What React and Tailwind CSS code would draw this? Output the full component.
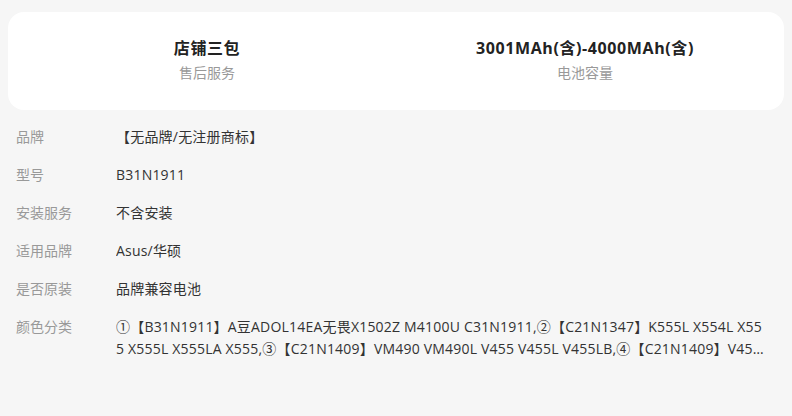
export default function App() {
  const summary = [
    { title: "店铺三包", sub: "售后服务" },
    { title: "3001MAh(含)-4000MAh(含)", sub: "电池容量" },
  ];

  const rows = [
    { label: "品牌", value: "【无品牌/无注册商标】" },
    { label: "型号", value: "B31N1911" },
    { label: "安装服务", value: "不含安装" },
    { label: "适用品牌", value: "Asus/华硕" },
    { label: "是否原装", value: "品牌兼容电池" },
    {
      label: "颜色分类",
      value:
        "①【B31N1911】A豆ADOL14EA无畏X1502Z M4100U C31N1911,②【C21N1347】K555L X554L X555 X555L X555LA X555,③【C21N1409】VM490 VM490L V455 V455L V455LB,④【C21N1409】V455 V455L V455LB X455 X455L X455LA",
    },
  ];

  return (
    <div
      className="min-h-screen w-[792px] h-[416px] bg-[#f6f6f6] pt-3 overflow-hidden"
      style={{ fontFamily: '"Open Sans", "Noto Sans CJK SC", sans-serif' }}
    >
      <div className="mx-2 h-[98px] bg-white rounded-2xl px-[10px] flex">
        {summary.map((s) => (
          <div key={s.sub} className="flex-1 flex flex-col items-center pt-[24px]">
            <div className="text-[16px] leading-6 font-bold text-[#222] tracking-[0.6px]">{s.title}</div>
            <div className="text-[14px] leading-5 text-[#999] mt-[3px]">{s.sub}</div>
          </div>
        ))}
      </div>

      <div className="mt-[16px] pl-4 pr-[22px] flex flex-col gap-[16px]">
        {rows.map((r) => (
          <div key={r.label} className="flex text-[14px] leading-[22px]">
            <div className="w-[100px] shrink-0 text-[#999]">{r.label}</div>
            <div className="flex-1 text-[#333] line-clamp-2 break-all tracking-[0.2px]">{r.value}</div>
          </div>
        ))}
      </div>
    </div>
  );
}
